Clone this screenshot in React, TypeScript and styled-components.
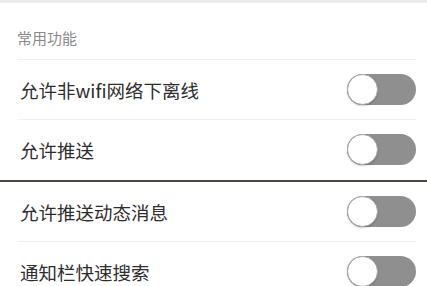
import React, { useState } from 'react';
import styled, { createGlobalStyle } from 'styled-components';

const GlobalStyle = createGlobalStyle`
  html, body {
    margin: 0;
    padding: 0;
    background: #ffffff;
    font-family: "Noto Sans CJK SC", "Noto Sans", sans-serif;
  }
`;

const Page = styled.div`
  width: 427px;
  height: 286px;
  overflow: hidden;
  background: #ffffff;
  border-top: 3px solid #ececec;
  box-sizing: border-box;
`;

const SectionTitle = styled.div`
  height: 57px;
  margin: 0 11px 0 17px;
  display: flex;
  align-items: flex-end;
  padding-bottom: 11px;
  box-sizing: border-box;
  border-bottom: 1px solid #f0f0f0;
  font-size: 15px;
  line-height: 20px;
  color: #8a8a8a;
`;

const Row = styled.div<{ $last?: boolean }>`
  height: 59px;
  margin: 0 11px 0 17px;
  padding-left: 3px;
  display: flex;
  align-items: center;
  justify-content: space-between;
  border-bottom: 1px solid ${({ $last }) => ($last ? 'transparent' : '#f0f0f0')};
`;

const Label = styled.span`
  font-size: 18.5px;
  color: #2e2e2e;
  line-height: 24px;
`;

const Splice = styled.div`
  height: 2px;
  background: #4b4442;
`;

const Track = styled.button<{ $on: boolean }>`
  position: relative;
  width: 69px;
  height: 31px;
  border: none;
  padding: 0;
  border-radius: 16px;
  background: ${({ $on }) => ($on ? '#4cd964' : '#8f8f8f')};
  cursor: pointer;
`;

const Knob = styled.span<{ $on: boolean }>`
  position: absolute;
  top: 0;
  left: ${({ $on }) => ($on ? '38px' : '0')};
  width: 31px;
  height: 31px;
  box-sizing: border-box;
  border-radius: 50%;
  background: #ffffff;
  border: 1px solid #a8a8a8;
  box-shadow: 0 1px 2px rgba(0, 0, 0, 0.2);
`;

const Toggle = () => {
  const [on, setOn] = useState(false);
  return (
    <Track $on={on} onClick={() => setOn(!on)}>
      <Knob $on={on} />
    </Track>
  );
};

export default function App() {
  return (
    <Page>
      <GlobalStyle />
      <SectionTitle>常用功能</SectionTitle>
      <Row>
        <Label>允许非wifi网络下离线</Label>
        <Toggle />
      </Row>
      <Row $last>
        <Label>允许推送</Label>
        <Toggle />
      </Row>
      <Splice />
      <Row>
        <Label>允许推送动态消息</Label>
        <Toggle />
      </Row>
      <Row $last>
        <Label>通知栏快速搜索</Label>
        <Toggle />
      </Row>
    </Page>
  );
}
